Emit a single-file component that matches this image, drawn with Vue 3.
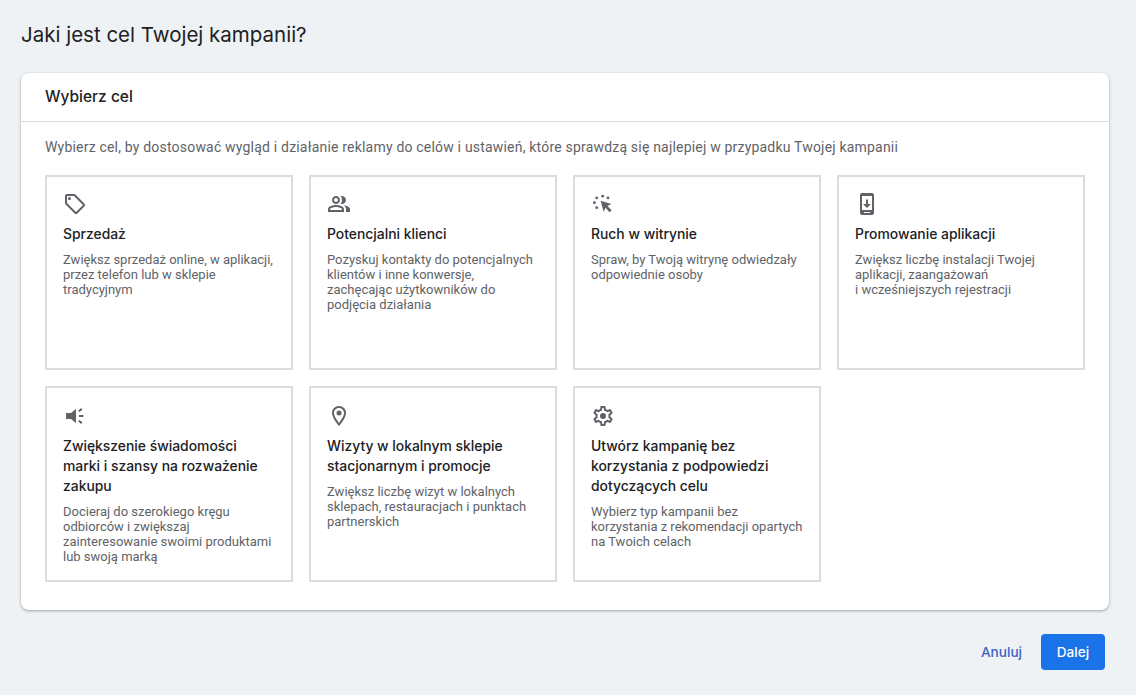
<script setup>
const goals = [
  { key: 'tag', title: 'Sprzedaż', desc: 'Zwiększ sprzedaż online, w aplikacji,\nprzez telefon lub w sklepie\ntradycyjnym' },
  { key: 'people', title: 'Potencjalni klienci', desc: 'Pozyskuj kontakty do potencjalnych\nklientów i inne konwersje,\nzachęcając użytkowników do\npodjęcia działania' },
  { key: 'click', title: 'Ruch w witrynie', desc: 'Spraw, by Twoją witrynę odwiedzały\nodpowiednie osoby' },
  { key: 'phone', title: 'Promowanie aplikacji', desc: 'Zwiększ liczbę instalacji Twojej\naplikacji, zaangażowań\ni wcześniejszych rejestracji' },
  { key: 'speaker', title: 'Zwiększenie świadomości\nmarki i szansy na rozważenie\nzakupu', desc: 'Docieraj do szerokiego kręgu\nodbiorców i zwiększaj\nzainteresowanie swoimi produktami\nlub swoją marką' },
  { key: 'pin', title: 'Wizyty w lokalnym sklepie\nstacjonarnym i promocje', desc: 'Zwiększ liczbę wizyt w lokalnych\nsklepach, restauracjach i punktach\npartnerskich' },
  { key: 'gear', title: 'Utwórz kampanię bez\nkorzystania z podpowiedzi\ndotyczących celu', desc: 'Wybierz typ kampanii bez\nkorzystania z rekomendacji opartych\nna Twoich celach' }
]
</script>

<template>
  <div class="page">
    <h1 class="heading">Jaki jest cel Twojej kampanii?</h1>
    <section class="panel">
      <header class="panel-head">Wybierz cel</header>
      <div class="panel-body">
        <p class="intro">Wybierz cel, by dostosować wygląd i działanie reklamy do celów i ustawień, które sprawdzą się najlepiej w przypadku Twojej kampanii</p>
        <div class="grid">
          <article v-for="g in goals" :key="g.key" class="goal">
            <svg class="icon" viewBox="0 0 24 24" fill="#5f6368">
              <template v-if="g.key === 'tag'">
                <path d="M21.41 11.58l-9-9C12.05 2.22 11.55 2 11 2H4c-1.1 0-2 .9-2 2v7c0 .55.22 1.05.59 1.42l9 9c.36.36.86.58 1.41.58s1.05-.22 1.41-.59l7-7c.37-.36.59-.86.59-1.41s-.23-1.06-.59-1.42zM13 20.01L4 11V4h7v-.01l9 9-7 7.02z" />
                <circle cx="6.5" cy="6.5" r="1.5" />
              </template>
              <template v-else-if="g.key === 'people'">
                <path d="M16.67 13.13C18.04 14.06 19 15.32 19 17v3h4v-3c0-2.18-3.57-3.47-6.33-3.87z" />
                <path d="M15 12c2.21 0 4-1.79 4-4s-1.79-4-4-4c-.47 0-.91.1-1.33.24C14.5 5.27 15 6.58 15 8s-.5 2.73-1.33 3.76c.42.14.86.24 1.33.24z" />
                <path d="M9 12c2.21 0 4-1.79 4-4s-1.79-4-4-4-4 1.79-4 4 1.79 4 4 4zm0-6c1.1 0 2 .9 2 2s-.9 2-2 2-2-.9-2-2 .9-2 2-2z" />
                <path d="M9 13c-2.67 0-8 1.34-8 4v3h16v-3c0-2.66-5.33-4-8-4zm6 5H3v-.99C3.2 16.29 6.3 15 9 15s5.8 1.29 6 2v1z" />
              </template>
              <template v-else-if="g.key === 'click'">
                <path d="M9.6 8.8l3 11 2-4 4 4.4 2-2-4.2-4.2 4-2z" />
                <circle cx="11.7" cy="4.2" r="1.4" />
                <circle cx="5.7" cy="5.9" r="1.4" />
                <circle cx="3.4" cy="10.7" r="1.4" />
                <circle cx="5.7" cy="15.7" r="1.4" />
                <circle cx="17" cy="5.9" r="1.4" />
              </template>
              <template v-else-if="g.key === 'phone'">
                <path fill-rule="evenodd" d="M7 1h10c1.1 0 2 .9 2 2v18c0 1.1-.9 2-2 2H7c-1.1 0-2-.9-2-2V3c0-1.1.9-2 2-2zm0 3v14h10V4H7zm2 16v1h6v-1H9z" />
                <path d="M16 12h-3V7.5h-2V12H8l4 4z" />
              </template>
              <template v-else-if="g.key === 'speaker'">
                <path d="M3 9v6h5l5 4V5L8 9z" />
                <path d="M16 11h4.4v2H16zM15.2 6.4l3-2.3 1.2 1.6-3 2.3zM15.2 17.6l3 2.3 1.2-1.6-3-2.3z" />
              </template>
              <template v-else-if="g.key === 'pin'">
                <path d="M12 2C8.13 2 5 5.13 5 9c0 5.25 7 13 7 13s7-7.75 7-13c0-3.87-3.13-7-7-7zM7 9c0-2.76 2.24-5 5-5s5 2.24 5 5c0 2.88-2.88 7.19-5 9.88C9.92 16.21 7 11.85 7 9z" />
                <circle cx="12" cy="9" r="2.5" />
              </template>
              <template v-else>
                <path d="M19.43 12.98c.04-.32.07-.64.07-.98 0-.34-.03-.66-.07-.98l2.11-1.65c.19-.15.24-.42.12-.64l-2-3.46c-.09-.16-.26-.25-.44-.25-.06 0-.12.01-.17.03l-2.49 1c-.52-.4-1.08-.73-1.69-.98l-.38-2.65C14.46 2.18 14.25 2 14 2h-4c-.25 0-.46.18-.49.42l-.38 2.65c-.61.25-1.17.59-1.69.98l-2.49-1c-.06-.02-.12-.03-.18-.03-.17 0-.34.09-.43.25l-2 3.46c-.13.22-.07.49.12.64l2.11 1.65c-.04.32-.07.65-.07.98 0 .33.03.66.07.98l-2.11 1.65c-.19.15-.24.42-.12.64l2 3.46c.09.16.26.25.44.25.06 0 .12-.01.17-.03l2.49-1c.52.4 1.08.73 1.69.98l.38 2.65c.03.24.24.42.49.42h4c.25 0 .46-.18.49-.42l.38-2.65c.61-.25 1.17-.59 1.69-.98l2.49 1c.06.02.12.03.18.03.17 0 .34-.09.43-.25l2-3.46c.12-.22.07-.49-.12-.64l-2.11-1.65zm-1.98-1.71c.04.31.05.52.05.73 0 .21-.02.43-.05.73l-.14 1.13.89.7 1.08.84-.7 1.21-1.27-.51-1.04-.42-.9.68c-.43.32-.84.56-1.25.73l-1.06.43-.16 1.13-.2 1.35h-1.4l-.19-1.35-.16-1.13-1.06-.43c-.43-.18-.83-.41-1.23-.71l-.91-.7-1.06.43-1.27.51-.7-1.21 1.08-.84.89-.7-.14-1.13c-.03-.31-.05-.54-.05-.74s.02-.43.05-.73l.14-1.13-.89-.7-1.08-.84.7-1.21 1.27.51 1.04.42.9-.68c.43-.32.84-.56 1.25-.73l1.06-.43.16-1.13.2-1.35h1.39l.19 1.35.16 1.13 1.06.43c.43.18.83.41 1.23.71l.91.7 1.06-.43 1.27-.51.7 1.21-1.07.85-.89.7.14 1.13z" />
                <circle cx="12" cy="12" r="3" />
              </template>
            </svg>
            <h3 class="goal-title">{{ g.title }}</h3>
            <p class="goal-desc">{{ g.desc }}</p>
          </article>
        </div>
      </div>
    </section>
    <footer class="actions">
      <button class="btn-text" type="button">Anuluj</button>
      <button class="btn-primary" type="button">Dalej</button>
    </footer>
  </div>
</template>

<style>
html, body { margin: 0; background: #eff2f4; }
</style>

<style scoped>
.page {
  box-sizing: border-box;
  width: 1136px;
  height: 695px;
  overflow: hidden;
  padding: 21px 27px 0 21px;
  background: #eff2f4;
  font-family: Roboto, "Liberation Sans", sans-serif;
}
.heading {
  margin: 0 0 24px;
  height: 28px;
  font-family: Inter, Roboto, sans-serif;
  font-size: 20.5px;
  line-height: 28px;
  font-weight: 400;
  color: #202124;
}
.panel {
  height: 537px;
  background: #fff;
  border-radius: 8px;
  box-shadow: 0 1px 3px rgba(60, 64, 67, 0.45);
}
.panel-head {
  box-sizing: border-box;
  height: 49px;
  padding: 0 24px;
  border-bottom: 1px solid #dadce0;
  font-family: Inter, Roboto, sans-serif;
  font-size: 15.5px;
  line-height: 48px;
  font-weight: 500;
  color: #202124;
}
.panel-body { padding: 15px 24px 0; }
.intro {
  margin: 0 0 18px;
  font-size: 14px;
  line-height: 20px;
  letter-spacing: 0.195px;
  color: #5f6368;
}
.grid {
  display: grid;
  grid-template-columns: repeat(4, 248px);
  grid-template-rows: 195px 196px;
  gap: 16px;
}
.goal {
  box-sizing: border-box;
  padding: 15px 16px 0;
  border: 2px solid #dadce0;
}
.goal:nth-child(n + 5) { padding-top: 16px; }
.icon { display: block; width: 24px; height: 24px; }
.goal-title {
  margin: 8px 0 8px;
  white-space: pre-line;
  font-family: Inter, Roboto, sans-serif;
  font-size: 13.9px;
  line-height: 20px;
  font-weight: 500;
  color: #202124;
}
.goal-desc {
  margin: 0;
  white-space: pre-line;
  font-size: 13px;
  line-height: 15px;
  color: #5f6368;
}
.actions {
  display: flex;
  justify-content: flex-end;
  align-items: center;
  gap: 19px;
  margin-top: 24px;
  padding-right: 4px;
}
.btn-text, .btn-primary {
  border: 0;
  padding: 0;
  font-family: Inter, Roboto, sans-serif;
  font-size: 13.6px;
  font-weight: 500;
}
.btn-text { background: none; color: #3c63c4; }
.btn-primary {
  width: 64px;
  height: 36px;
  border-radius: 4px;
  background: #1a73e8;
  color: #fff;
}
</style>
